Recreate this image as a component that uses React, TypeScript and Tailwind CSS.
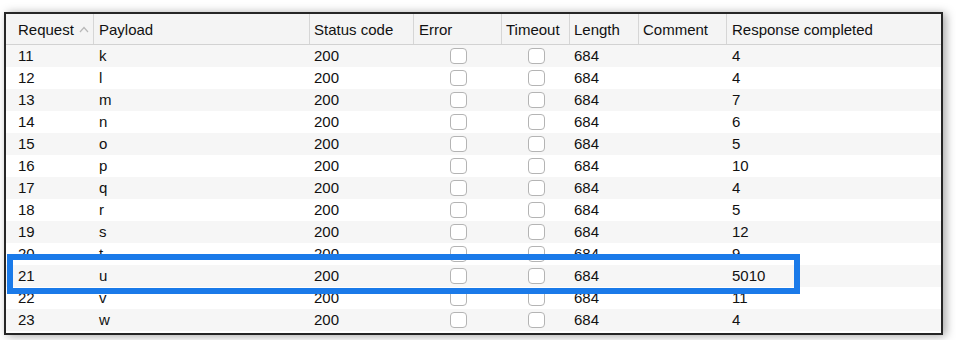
import React from "react";

const cols = [
  { name: "Request", w: "w-[88px] pl-[12px]" },
  { name: "Payload", w: "w-[216px] pl-[5px]" },
  { name: "Status code", w: "w-[104px] pl-[4px]" },
  { name: "Error", w: "w-[88px] pl-[5px]" },
  { name: "Timeout", w: "w-[68px] pl-[4px]" },
  { name: "Length", w: "w-[69px] pl-[4px]" },
  { name: "Comment", w: "w-[88px] pl-[4px]" },
  { name: "Response completed", w: "w-[214px] pl-[5px]" },
];

const rows: [number, string, string][] = [
  [11, "k", "4"],
  [12, "l", "4"],
  [13, "m", "7"],
  [14, "n", "6"],
  [15, "o", "5"],
  [16, "p", "10"],
  [17, "q", "4"],
  [18, "r", "5"],
  [19, "s", "12"],
  [20, "t", "9"],
  [21, "u", "5010"],
  [22, "v", "11"],
  [23, "w", "4"],
];

const Check = () => (
  <div className="h-[16px] w-[17px] rounded-[4px] border border-[#b4b4b4] bg-white" />
);

const App = () => {
  return (
    <div
      className="relative h-[340px] w-[956px] overflow-hidden bg-white pl-[4px] pt-[12px] text-[15px] text-[#111]"
      style={{ fontFamily: '"Liberation Sans", Arial, sans-serif' }}
    >
      <div className="h-[323px] w-[939px] overflow-hidden border-2 border-[#262626] bg-white shadow-[3px_1px_9px_rgba(0,0,0,0.35)]">
        {/* header */}
        <div className="flex h-[31px] border-b border-[#d2d2d2] bg-[#f4f4f4]">
          {cols.map((c, i) => (
            <div
              key={c.name}
              className={`flex items-center pt-[2px] ${c.w} ${i < cols.length - 1 ? "border-r border-[#d6d6d6]" : ""}`}
            >
              {c.name}
              {i === 0 && (
                <svg width="10" height="7" viewBox="0 0 10 7" className="ml-[5px] mt-[-2px]">
                  <path d="M1 6 L5 1.5 L9 6" fill="none" stroke="#b8b8b8" strokeWidth="1.2" />
                </svg>
              )}
            </div>
          ))}
        </div>
        {/* rows */}
        {rows.map(([n, p, r]) => (
          <div
            key={n}
            className={`flex h-[22px] items-center ${n % 2 === 1 ? "bg-[#f6f6f6]" : "bg-white"}`}
          >
            <div className="w-[88px] pl-[12px]">{n}</div>
            <div className="w-[216px] pl-[5px]">{p}</div>
            <div className="w-[104px] pl-[4px]">200</div>
            <div className="flex w-[88px] justify-center">
              <Check />
            </div>
            <div className="flex w-[68px] justify-center">
              <Check />
            </div>
            <div className="w-[69px] pl-[4px]">684</div>
            <div className="w-[88px]" />
            <div className="w-[214px] pl-[5px]">{r}</div>
          </div>
        ))}
      </div>
      {/* highlight annotation */}
      <div className="absolute left-[7px] top-[254px] h-[40px] w-[793px] border-[6px] border-[#1a7ae9]" />
    </div>
  );
};

export default App;
